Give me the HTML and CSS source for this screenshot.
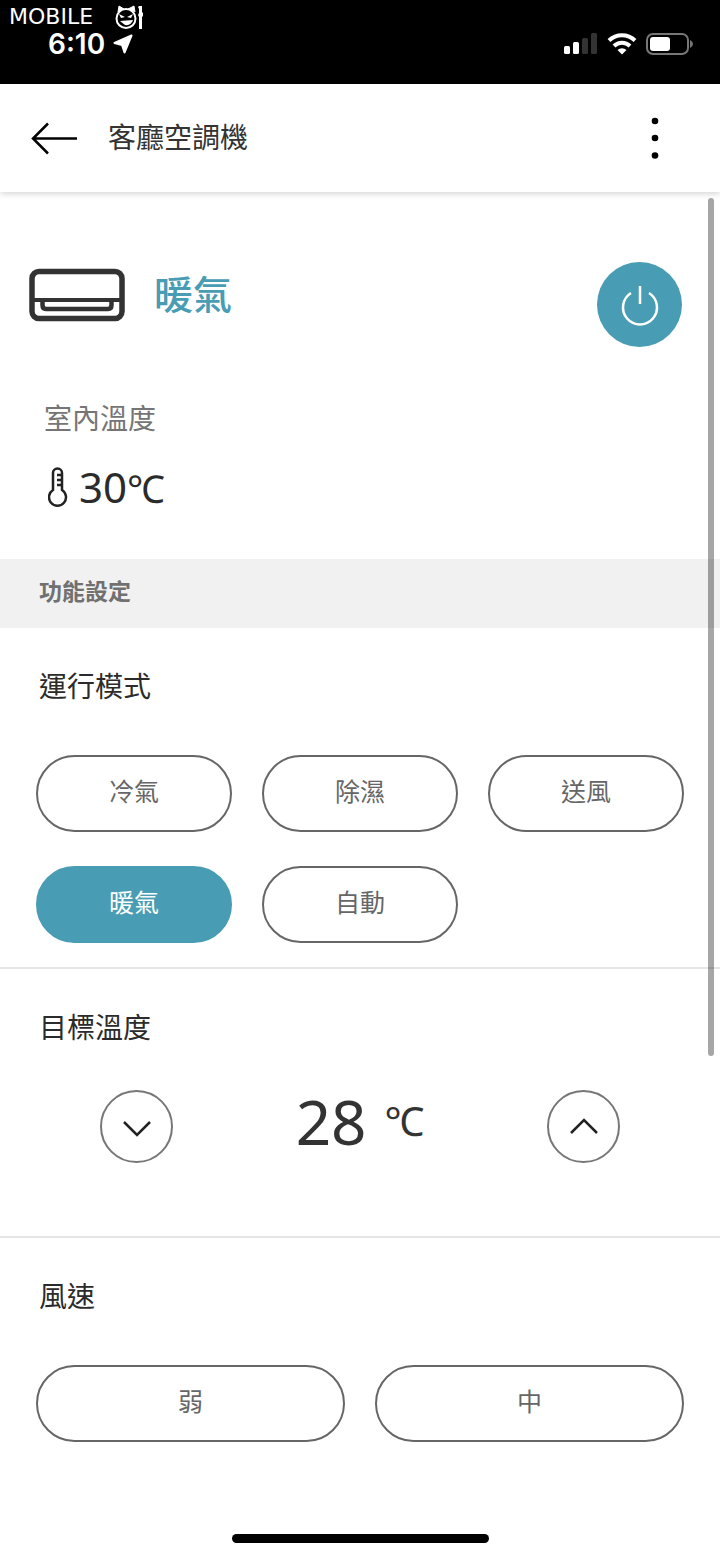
FILE: index.html
```html
<!doctype html>
<html lang="zh-Hant">
<head>
  <meta charset="UTF-8">
  <meta name="viewport" content="width=device-width, initial-scale=1.0">
  <title>客廳空調機</title>
  <link rel="stylesheet" href="styles.css">
</head>
<body>
  <div class="status-bar">
    <div class="watermark">
      <span>MOBILE</span>
      <svg width="30" height="26" viewBox="0 0 30 26" aria-hidden="true">
        <circle cx="13" cy="14.500" r="9.500" fill="none" stroke="#fff" stroke-width="2"/>
        <path d="M5 8 L6 2 L11 5 M15 5 L21 2 L22 8" fill="#fff" stroke="#fff"/>
        <path d="M6 10 L12 13 L8 14 Z M20 10 L14 13 L18 14 Z" fill="#fff"/>
        <path d="M7 17 L20 16 Q18 22 12 21 Z" fill="#fff"/>
        <path d="M25 3 L26 2 H29 V8 L30 9 V12 L29 13 V25 H26 V13 L25 11 L26 9 V5 Z" fill="#fff"/>
      </svg>
    </div>
    <div class="time">
      <span>6:10</span>
      <svg width="20" height="20" viewBox="0 0 20 20" aria-hidden="true">
        <path d="M18.500 1.500 L1.500 9 L9 11 L11.500 18.500 Z" fill="#fff" stroke="#fff" stroke-width="2" stroke-linejoin="round"/>
      </svg>
    </div>
    <div class="status-icons">
      <svg width="34" height="22" viewBox="0 0 34 22" aria-hidden="true">
        <rect x="0" y="13" width="6" height="8" rx="1.500" fill="#fff"/>
        <rect x="9" y="9" width="6" height="12" rx="1.500" fill="#fff"/>
        <rect x="18" y="5" width="6" height="16" rx="1.500" fill="#333"/>
        <rect x="27" y="0" width="6" height="21" rx="1.500" fill="#333"/>
      </svg>
      <svg width="30" height="22" viewBox="0 0 30 22" aria-hidden="true">
        <path d="M2 7.500 A18.500 18.500 0 0 1 28 7.500" fill="none" stroke="#fff" stroke-width="4"/>
        <path d="M7 13 A11.500 11.500 0 0 1 23 13" fill="none" stroke="#fff" stroke-width="4"/>
        <path d="M15 21.500 L10.500 17 A6.500 6.500 0 0 1 19.500 17 Z" fill="#fff"/>
      </svg>
      <svg width="48" height="22" viewBox="0 0 48 22" aria-hidden="true">
        <rect x="1" y="1" width="41" height="20" rx="6" fill="none" stroke="#777" stroke-width="2"/>
        <rect x="4" y="4" width="20" height="14" rx="3" fill="#fff"/>
        <path d="M44 7 Q47 8.500 47 11 Q47 13.500 44 15 Z" fill="#777"/>
      </svg>
    </div>
  </div>

  <header>
    <button class="icon-button" aria-label="返回">
      <svg width="48" height="34" viewBox="0 0 48 34">
        <path d="M47 17.500 H3 M18 2.500 L3 17.500 L18 32.500" fill="none" stroke="#000" stroke-width="2.500"/>
      </svg>
    </button>
    <h1>客廳空調機</h1>
    <button class="icon-button" aria-label="更多">
      <svg width="14" height="44" viewBox="0 0 14 44">
        <circle cx="7" cy="5" r="3.300"/>
        <circle cx="7" cy="22" r="3.300"/>
        <circle cx="7" cy="39.500" r="3.300"/>
      </svg>
    </button>
  </header>

  <main>
    <section class="overview">
      <div class="overview-top">
        <div class="device">
          <svg width="97" height="54" viewBox="0 0 97 54" aria-hidden="true">
            <g fill="none" stroke="#333">
              <rect x="4" y="3.500" width="90" height="47" rx="7" stroke-width="5.500"/>
              <path d="M5 32 H92" stroke-width="4"/>
              <path d="M14.500 32 V37 Q14.500 41 18 41 H80 Q83.500 41 83.500 37 V32" stroke-width="4.500"/>
            </g>
          </svg>
          <span class="device-mode">暖氣</span>
        </div>
        <button class="power" aria-label="電源">
          <svg width="40" height="42" viewBox="0 0 40 42">
            <path d="M20 2 V20 M11 9 A17 17 0 1 0 29 9" fill="none" stroke="#fff" stroke-width="2.500"/>
          </svg>
        </button>
      </div>
      <p class="room-label">室內溫度</p>
      <p class="room-temp">
        <svg width="20" height="42" viewBox="0 0 20 42" aria-hidden="true">
          <g fill="none" stroke="#222" stroke-width="2.500">
            <path d="M5 23 V6 A4.500 4.500 0 0 1 14 6 V23 A8.500 8.500 0 1 1 5 23 Z"/>
            <path d="M9 8 H14 M9 13 H14 M9 18 H14"/>
          </g>
        </svg>
        <span>30<span class="room-unit">℃</span></span>
      </p>
    </section>

    <h2>功能設定</h2>

    <section class="setting">
      <h3>運行模式</h3>
      <div class="options three">
        <button class="pill">冷氣</button>
        <button class="pill">除濕</button>
        <button class="pill">送風</button>
        <button class="pill active">暖氣</button>
        <button class="pill">自動</button>
      </div>
    </section>

    <section class="setting">
      <h3>目標溫度</h3>
      <div class="stepper">
        <button class="round" aria-label="降低溫度">
          <svg width="28" height="20" viewBox="0 0 28 20">
            <path d="M1 5 L14 18 L27 5" fill="none" stroke="#222" stroke-width="2.500"/>
          </svg>
        </button>
        <p class="target"><span>28</span><span class="unit">℃</span></p>
        <button class="round" aria-label="提高溫度">
          <svg width="28" height="20" viewBox="0 0 28 20">
            <path d="M1 16 L14 3 L27 16" fill="none" stroke="#222" stroke-width="2.500"/>
          </svg>
        </button>
      </div>
    </section>

    <section class="setting">
      <h3>風速</h3>
      <div class="options two">
        <button class="pill">弱</button>
        <button class="pill">中</button>
      </div>
    </section>
  </main>

  <div class="scroll-thumb"></div>
  <div class="home-indicator"></div>
</body>
</html>
```

FILE: styles.css
```css
* {
    margin: 0;
    padding: 0;
    box-sizing: border-box;
}

body {
    position: relative;
    display: flex;
    flex-direction: column;
    min-height: 100vh;
    background-color: #fff;
    color: #2b2b2b;
    font-family: "Noto Sans CJK TC", sans-serif;
    font-size: 28px;
}

svg {
    display: block;
    flex-shrink: 0;
}

button {
    border: none;
    background: none;
    font-family: inherit;
    cursor: pointer;
}

/* Phone status bar */
.status-bar {
    position: relative;
    display: flex;
    justify-content: space-between;
    align-items: flex-start;
    height: 84px;
    padding: 33px 26px 0 48px;
    background-color: #000;
    color: #fff;
}

.watermark {
    position: absolute;
    top: 4px;
    left: 9px;
    display: flex;
    justify-content: space-between;
    align-items: center;
    width: 134px;
    font-family: "DejaVu Sans", sans-serif;
    font-size: 22px;
    line-height: 26px;
}

.time {
    display: flex;
    align-items: center;
    gap: 8px;
    font-family: Inter, sans-serif;
    font-size: 28px;
    font-weight: 600;
    line-height: 22px;
}

.status-icons {
    display: flex;
    align-items: center;
    gap: 9px;
}

/* Title bar */
header {
    display: flex;
    align-items: center;
    height: 108px;
    padding: 0 58px 0 30px;
    box-shadow: 0 2px 6px rgba(0, 0, 0, 0.16);
}

h1 {
    flex: 1;
    padding: 0 30px 4px;
    color: #333;
    font-size: 28px;
    font-weight: 400;
    line-height: 40px;
}

/* Device overview */
.overview {
    padding: 70px 38px 41px 28px;
}

.overview-top {
    display: flex;
    justify-content: space-between;
    align-items: flex-start;
}

.device {
    display: flex;
    align-items: center;
    gap: 29px;
    height: 66px;
}

.device-mode {
    padding-bottom: 7px;
    color: #489cb3;
    font-size: 39px;
    font-weight: 500;
    line-height: 60px;
}

.power {
    display: flex;
    justify-content: center;
    align-items: center;
    width: 85px;
    height: 85px;
    border-radius: 50%;
    background-color: #489cb3;
}

.room-label {
    margin-top: 50px;
    padding-left: 16px;
    color: #757575;
    line-height: 40px;
}

.room-temp {
    display: flex;
    align-items: center;
    gap: 11px;
    margin-top: 20px;
    padding-left: 20px;
    font-family: "Noto Sans", sans-serif;
    font-size: 42px;
    line-height: 60px;
}

.room-unit {
    font-size: 38px;
}

/* Settings */
h2 {
    padding: 11px 39px 18px;
    background-color: #f1f1f1;
    color: #707070;
    font-size: 23px;
    font-weight: 700;
    line-height: 40px;
}

.setting {
    padding: 37px 36px 24px;
}

.setting + .setting {
    border-top: 2px solid #e6e6e6;
}

h3 {
    padding-left: 3px;
    font-size: 28px;
    font-weight: 400;
    line-height: 40px;
}

.options {
    display: grid;
    gap: 34px 30px;
    margin-top: 50px;
}

.three {
    grid-template-columns: repeat(3, 1fr);
}

.two {
    grid-template-columns: repeat(2, 1fr);
}

.pill {
    height: 77px;
    padding-bottom: 8px;
    border: 2px solid #666;
    border-radius: 39px;
    color: #666;
    font-size: 25px;
}

.pill.active {
    border-color: #489cb3;
    background-color: #489cb3;
    color: #fff;
}

.stepper {
    display: flex;
    justify-content: space-between;
    align-items: center;
    margin: 44px 0 49px;
    padding: 0 64px;
}

.round {
    display: flex;
    justify-content: center;
    align-items: center;
    width: 73px;
    height: 73px;
    border: 2px solid #777;
    border-radius: 50%;
}

.target {
    display: flex;
    align-items: center;
    gap: 18px;
    padding-bottom: 12px;
    color: #333;
    font-family: "Noto Sans", sans-serif;
    font-size: 62px;
    line-height: 60px;
}

.unit {
    font-size: 40px;
}

/* Overlays */
.scroll-thumb {
    position: absolute;
    top: 198px;
    right: 6px;
    width: 6px;
    height: 858px;
    border-radius: 3px;
    background-color: rgba(0, 0, 0, 0.35);
}

.home-indicator {
    width: 257px;
    height: 9px;
    margin: auto auto 16px;
    border-radius: 5px;
    background-color: #000;
}
```
